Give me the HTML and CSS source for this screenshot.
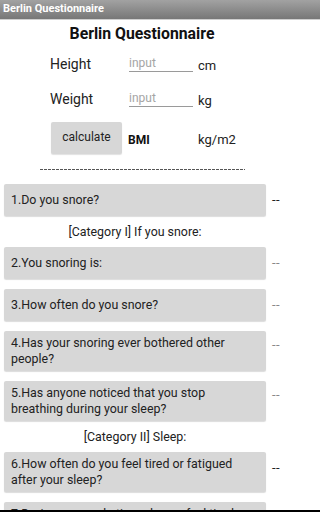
FILE: index.html
```html
<!DOCTYPE html>
<html>
<head>
<meta charset="utf-8">
<link rel="stylesheet" href="styles.css">
</head>
<body>
<div class="titlebar">Berlin Questionnaire</div>
<div class="heading">Berlin Questionnaire</div>
<div class="form">
  <div class="frow">
    <span class="flabel">Height</span>
    <span class="finput">input</span>
    <span class="funit">cm</span>
  </div>
  <div class="frow">
    <span class="flabel">Weight</span>
    <span class="finput">input</span>
    <span class="funit">kg</span>
  </div>
  <div class="brow">
    <div class="calc">calculate</div>
    <span class="bmi">BMI</span>
    <span class="bunit">kg/m2</span>
  </div>
</div>
<div class="divider"></div>
<div class="qlist">
  <div class="qrow"><div class="qbtn">1.Do you snore?</div><span class="ans dark">--</span></div>
  <div class="cat">[Category I] If you snore:</div>
  <div class="qrow"><div class="qbtn">2.You snoring is:</div><span class="ans">--</span></div>
  <div class="qrow"><div class="qbtn">3.How often do you snore?</div><span class="ans">--</span></div>
  <div class="qrow"><div class="qbtn">4.Has your snoring ever bothered other people?</div><span class="ans top">--</span></div>
  <div class="qrow"><div class="qbtn">5.Has anyone noticed that you stop breathing during your sleep?</div><span class="ans top">--</span></div>
  <div class="cat">[Category II] Sleep:</div>
  <div class="qrow"><div class="qbtn">6.How often do you feel tired or fatigued after your sleep?</div><span class="ans dark">--</span></div>
  <div class="qrow"><div class="qbtn">7.During your waketime, do you feel tired, fatigued or not up to par?</div><span class="ans dark">--</span></div>
</div>
<div class="bottombar"></div>
</body>
</html>
```
FILE: styles.css
```css
html, body {
  margin: 0;
  padding: 0;
  background: #fff;
}
body {
  height: 512px;
  overflow: hidden;
  font-family: Roboto, "Liberation Sans", sans-serif;
  color: #1c1c1c;
}
.titlebar {
  height: 19px;
  line-height: 18px;
  padding-left: 3px;
  background: linear-gradient(#a2a2a2, #777777);
  border-bottom: 1px solid #cfcfcf;
  color: #fff;
  font-weight: bold;
  font-size: 11px;
}
.heading {
  margin-top: 4px;
  height: 20px;
  line-height: 20px;
  width: 284px;
  text-align: center;
  font-weight: bold;
  font-size: 15.8px;
  color: #111;
}
.form {
  padding-left: 50px;
  margin-top: 2px;
}
.frow {
  display: flex;
  align-items: center;
  height: 35px;
}
.flabel {
  width: 79px;
  font-size: 14px;
  color: #222;
}
.finput {
  width: 64px;
  font-size: 12px;
  color: #a5a5a5;
  border-bottom: 1px solid #9a9a9a;
  line-height: 14px;
  padding-top: 1px;
  padding-bottom: 1px;
}
.funit {
  margin-left: 5px;
  font-size: 13px;
  color: #222;
  margin-top: 3px;
}
.brow {
  display: flex;
  align-items: center;
  margin-top: 5px;
  height: 33px;
}
.calc {
  width: 71px;
  height: 32px;
  margin-left: 1px;
  background: #d7d7d7;
  border-radius: 2px;
  box-shadow: 0 1px 1px rgba(0,0,0,0.12);
  display: flex;
  align-items: center;
  justify-content: center;
  font-size: 12px;
  color: #222;
  padding-bottom: 1px;
  box-sizing: border-box;
}
.bmi {
  margin-left: 6px;
  width: 70px;
  font-weight: bold;
  font-size: 12px;
  color: #111;
  margin-top: 4px;
}
.bunit {
  font-size: 13px;
  color: #222;
  margin-top: 4px;
}
.divider {
  margin: 15px 0 0 40px;
  width: 205px;
  height: 1px;
  background: repeating-linear-gradient(to right, #555 0 3px, transparent 3px 4px);
}
.qlist {
  margin-top: 9px;
  width: 284px;
}
.qrow {
  display: flex;
  align-items: flex-start;
  padding: 5px 0 5px 4px;
}
.qbtn {
  width: 262px;
  min-height: 32px;
  box-sizing: border-box;
  padding: 4px 7px;
  background: #d7d7d7;
  border-radius: 2px;
  box-shadow: 0 1px 1px rgba(0,0,0,0.14);
  display: flex;
  align-items: center;
  font-size: 12.4px;
  line-height: 16px;
  color: #222;
}
.ans {
  margin-left: 6px;
  margin-top: 8px;
  line-height: 16px;
  font-size: 13px;
  letter-spacing: 0.5px;
  color: #888;
}
.ans.top {
  margin-top: 6px;
}
.ans.dark {
  color: #222;
}
.cat {
  height: 21px;
  line-height: 21px;
  text-align: center;
  font-size: 12.4px;
  color: #222;
  padding-right: 14px;
}
.bottombar {
  position: fixed;
  left: 0;
  right: 0;
  bottom: 0;
  height: 2px;
  background: #000;
}
```
